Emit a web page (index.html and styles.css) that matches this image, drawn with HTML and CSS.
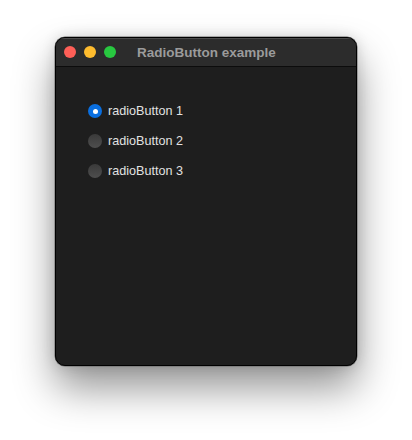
FILE: index.html
```html
<!DOCTYPE html>
<html>
<head>
<meta charset="utf-8">
<link rel="stylesheet" href="styles.css">
</head>
<body>
<div class="window">
  <div class="titlebar">
    <div class="lights">
      <span class="light red"></span>
      <span class="light yellow"></span>
      <span class="light green"></span>
    </div>
    <div class="title">RadioButton example</div>
  </div>
  <div class="content">
    <label class="radio"><span class="dot checked"></span><span class="label">radioButton 1</span></label>
    <label class="radio"><span class="dot"></span><span class="label">radioButton 2</span></label>
    <label class="radio"><span class="dot"></span><span class="label">radioButton 3</span></label>
  </div>
</div>
</body>
</html>
```

FILE: styles.css
```css
html, body {
  margin: 0;
  padding: 0;
  background: #ffffff;
  width: 412px;
  height: 440px;
  overflow: hidden;
}
body {
  padding-top: 37px;
  padding-left: 55px;
  box-sizing: border-box;
  font-family: "Liberation Sans", Arial, sans-serif;
}
.window {
  width: 302px;
  height: 329px;
  box-sizing: border-box;
  border-radius: 10px;
  background: #1e1e1e;
  border: 1px solid #000;
  box-shadow: 0 0 0 0.5px #6a6a6a, 0 22px 40px rgba(0,0,0,0.42), 0 0 14px rgba(0,0,0,0.15);
  overflow: hidden;
  display: flex;
  flex-direction: column;
}
.titlebar {
  height: 28px;
  flex: none;
  background: #2c2c2c;
  border-bottom: 1px solid #0c0c0c;
  box-shadow: inset 0 1px 0 #4a4a4a;
  position: relative;
  display: flex;
  align-items: center;
  justify-content: center;
}
.lights {
  position: absolute;
  left: 8px;
  top: 8px;
  display: flex;
  gap: 8px;
}
.light {
  width: 12px;
  height: 12px;
  border-radius: 50%;
  display: block;
}
.red { background: #fe5f57; }
.yellow { background: #febc2e; }
.green { background: #28c840; }
.title {
  color: #9b9b9b;
  font-size: 13.5px;
  font-weight: 700;
  margin-left: 1px;
}
.content {
  padding: 37px 0 0 32px;
  display: flex;
  flex-direction: column;
  gap: 16px;
}
.radio {
  display: flex;
  align-items: center;
  height: 14px;
}
.dot {
  width: 14px;
  height: 14px;
  border-radius: 50%;
  box-sizing: border-box;
  background: linear-gradient(#3a3a3a, #4e4e4e);
  margin-right: 6px;
  position: relative;
}
.dot.checked {
  background: #0a6fe0;
}
.dot.checked::after {
  content: "";
  position: absolute;
  left: 4.5px;
  top: 4.5px;
  width: 5px;
  height: 5px;
  border-radius: 50%;
  background: #fff;
}
.label {
  color: #e2e2e2;
  font-size: 12.6px;
  line-height: 14px;
  margin-top: -1px;
}
```
